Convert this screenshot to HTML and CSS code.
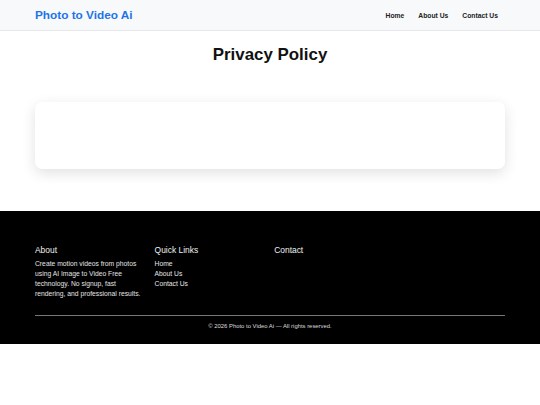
FILE: index.html
```html
<!DOCTYPE html>
<html lang="en">
<head>
<meta charset="utf-8">
<title>Privacy Policy - Photo to Video Ai</title>
<link rel="stylesheet" href="styles.css">
</head>
<body>
<header class="site-header">
  <div class="container header-inner">
    <a class="logo" href="#">Photo to Video Ai</a>
    <nav class="nav">
      <a href="#">Home</a>
      <a href="#">About Us</a>
      <a href="#">Contact Us</a>
    </nav>
  </div>
</header>
<main class="main">
  <div class="container">
    <h1 class="page-title">Privacy Policy</h1>
    <div class="card"></div>
  </div>
</main>
<footer class="site-footer">
  <div class="container">
    <div class="footer-grid">
      <div class="footer-col">
        <h3>About</h3>
        <p>Create motion videos from photos using AI Image to Video Free technology. No signup, fast rendering, and professional results.</p>
      </div>
      <div class="footer-col">
        <h3>Quick Links</h3>
        <ul>
          <li><a href="#">Home</a></li>
          <li><a href="#">About Us</a></li>
          <li><a href="#">Contact Us</a></li>
        </ul>
      </div>
      <div class="footer-col">
        <h3>Contact</h3>
      </div>
      <div class="footer-col"></div>
    </div>
    <div class="footer-bottom">© 2026 Photo to Video Ai — All rights reserved.</div>
  </div>
</footer>
</body>
</html>
```

FILE: styles.css
```css
* { box-sizing: border-box; }
html, body { margin: 0; padding: 0; }
body {
  font-family: "Liberation Sans", Arial, sans-serif;
  font-size: 6.75px;
  color: #111;
  background: #fff;
}
a { text-decoration: none; color: inherit; }
.container {
  width: 470px;
  margin: 0 auto;
}
.site-header {
  background: #f8f9fb;
  border-bottom: 1px solid #e6e8ec;
}
.header-inner {
  height: 30px;
  display: flex;
  align-items: center;
  justify-content: space-between;
}
.logo {
  color: #1e74e6;
  font-weight: 700;
  font-size: 11.8px;
}
.nav { display: flex; }
.nav a {
  font-weight: 700;
  font-size: 6.75px;
  color: #222;
  padding: 0 7px;
}
.main {
  padding: 14px 0 42px;
}
.page-title {
  margin: 0;
  text-align: center;
  font-size: 16.9px;
  line-height: 20px;
  font-weight: 700;
  color: #111;
}
.card {
  margin-top: 37px;
  height: 67px;
  background: #fff;
  border-radius: 7px;
  box-shadow: 0 4px 14px rgba(0,0,0,0.12);
}
.site-footer {
  background: #000;
  color: #e6e6e6;
  padding: 34px 0 13px;
}
.footer-grid {
  display: grid;
  grid-template-columns: repeat(4, 1fr);
  gap: 8.4px;
}
.footer-col h3 {
  margin: 0 0 4px;
  font-size: 8.44px;
  line-height: 10px;
  font-weight: 400;
  color: #f0f0f0;
}
.footer-col p {
  margin: 0;
  line-height: 10.1px;
  color: #e4e4e4;
}
.footer-col ul {
  list-style: none;
  margin: 0;
  padding: 0;
  line-height: 10.1px;
}
.footer-bottom {
  margin-top: 16px;
  border-top: 1px solid #777;
  padding-top: 6px;
  text-align: center;
  font-size: 5.9px;
  line-height: 9px;
  color: #ddd;
}
```
